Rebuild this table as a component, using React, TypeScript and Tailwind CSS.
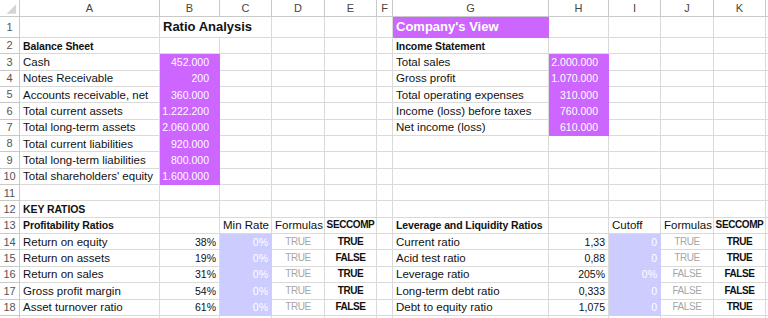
import React from "react";

type Kind =
  | "text"
  | "bold"
  | "num"
  | "purple"
  | "blue"
  | "muted"
  | "check"
  | "title"
  | "company";

type Cell = { t?: string; k?: Kind; span?: number };

const kindClass: Record<Kind, string> = {
  text: "justify-start pl-[3px] text-[11.5px] text-[#111] border-[#dadada]",
  bold: "justify-start pl-[3px] text-[10.5px] font-bold tracking-[-0.1px] text-[#111] border-[#dadada]",
  num: "justify-end pr-[3px] text-[10.5px] text-[#111] border-[#dadada]",
  purple: "justify-end pr-[10px] text-[10.5px] text-white bg-[#cc66ff] border-[#cc66ff]",
  blue: "justify-end pr-[3px] text-[10.5px] text-white bg-[#ccccff] border-[#ccccff]",
  muted: "justify-center text-[10px] tracking-[-0.4px] text-[#a6a6a6] border-[#dadada]",
  check: "justify-center text-[10px] font-bold tracking-[-0.4px] text-[#111] border-[#dadada]",
  title: "justify-start pl-[3px] text-[13px] font-bold text-[#111] border-[#dadada]",
  company: "justify-start pl-[3px] text-[13px] font-bold text-white bg-[#cc66ff] border-[#cc66ff]",
};

const letters = ["A", "B", "C", "D", "E", "F", "G", "H", "I", "J", "K"];

const E: Cell = {};

const balance: [string, string][] = [
  ["Cash", "452.000"],
  ["Notes Receivable", "200"],
  ["Accounts receivable, net", "360.000"],
  ["Total current assets", "1.222.200"],
  ["Total long-term assets", "2.060.000"],
  ["Total current liabilities", "920.000"],
  ["Total long-term liabilities", "800.000"],
  ["Total shareholders' equity", "1.600.000"],
];

const income: [string, string][] = [
  ["Total sales", "2.000.000"],
  ["Gross profit", "1.070.000"],
  ["Total operating expenses", "310.000"],
  ["Income (loss) before taxes", "760.000"],
  ["Net income (loss)", "610.000"],
];

const profit = [
  ["Return on equity", "38%", "TRUE"],
  ["Return on assets", "19%", "FALSE"],
  ["Return on sales", "31%", "TRUE"],
  ["Gross profit margin", "54%", "TRUE"],
  ["Asset turnover ratio", "61%", "FALSE"],
];

const leverage = [
  ["Current ratio", "1,33", "0", "TRUE", "TRUE"],
  ["Acid test ratio", "0,88", "0", "TRUE", "TRUE"],
  ["Leverage ratio", "205%", "0%", "FALSE", "FALSE"],
  ["Long-term debt ratio", "0,333", "0", "FALSE", "FALSE"],
  ["Debt to equity ratio", "1,075", "0", "FALSE", "TRUE"],
];

function buildRows(): Cell[][] {
  const rows: Cell[][] = [];
  rows.push([
    E,
    { t: "Ratio Analysis", k: "title", span: 2 },
    E,
    E,
    E,
    { t: "Company's View", k: "company" },
    E,
    E,
    E,
    E,
  ]);
  rows.push([{ t: "Balance Sheet", k: "bold" }, E, E, E, E, E, { t: "Income Statement", k: "bold" }, E, E, E, E]);
  balance.forEach(([label, val], i) => {
    const inc = income[i];
    rows.push([
      { t: label, k: "text" },
      { t: val, k: "purple" },
      E,
      E,
      E,
      E,
      inc ? { t: inc[0], k: "text" } : E,
      inc ? { t: inc[1], k: "purple" } : E,
      E,
      E,
      E,
    ]);
  });
  rows.push([E, E, E, E, E, E, E, E, E, E, E]);
  rows.push([{ t: "KEY RATIOS", k: "bold" }, E, E, E, E, E, E, E, E, E, E]);
  rows.push([
    { t: "Profitability Ratios", k: "bold" },
    E,
    { t: "Min Rate", k: "text" },
    { t: "Formulas", k: "text" },
    { t: "SECCOMP", k: "check" },
    E,
    { t: "Leverage and Liquidity Ratios", k: "bold" },
    E,
    { t: "Cutoff", k: "text" },
    { t: "Formulas", k: "text" },
    { t: "SECCOMP", k: "check" },
  ]);
  profit.forEach((p, i) => {
    const l = leverage[i];
    rows.push([
      { t: p[0], k: "text" },
      { t: p[1], k: "num" },
      { t: "0%", k: "blue" },
      { t: "TRUE", k: "muted" },
      { t: p[2], k: "check" },
      E,
      { t: l[0], k: "text" },
      { t: l[1], k: "num" },
      { t: l[2], k: "blue" },
      { t: l[3], k: "muted" },
      { t: l[4], k: "check" },
    ]);
  });
  return rows;
}

function SheetCell({ cell }: { cell: Cell }) {
  const kind = cell.k ?? "text";
  return (
    <div
      className={`flex items-center whitespace-nowrap border-r border-b leading-[16px] ${kindClass[kind]} ${
        cell.span === 2 ? "col-span-2" : ""
      }`}
    >
      {cell.t}
    </div>
  );
}

export default function App() {
  const rows = buildRows();

  return (
    <div className="h-[318px] w-[768px] overflow-hidden bg-white font-['Liberation_Sans',Arial,sans-serif]">
      <div className="grid h-full grid-cols-[20px_140px_60px_52px_53px_52px_16px_156px_60px_52px_53px_52px_1fr] grid-rows-[17px_21px_repeat(17,16.35px)_1fr]">
        {/* corner */}
        <div className="flex items-end justify-end border-r border-b border-[#c9c9c9] bg-white">
          <svg width="20" height="17" viewBox="0 0 20 17">
            <polygon points="17,5 17,15 7,15" fill="#d4d4d4" />
          </svg>
        </div>
        {/* column headers */}
        {letters.map((l) => (
          <div
            key={l}
            className="flex items-center justify-center border-r border-b border-[#c9c9c9] bg-white text-[11px] text-[#444]"
          >
            {l}
          </div>
        ))}
        <div className="border-b border-[#c9c9c9] bg-white" />

        {/* sheet rows */}
        {rows.map((row, ri) => (
          <React.Fragment key={ri}>
            <div className="flex items-center justify-center border-r border-b border-[#c9c9c9] bg-white text-[11px] text-[#555]">
              {ri + 1}
            </div>
            {row.map((cell, ci) => (
              <SheetCell key={ci} cell={cell} />
            ))}
            <div className="border-b border-[#dadada]" />
          </React.Fragment>
        ))}

        {/* partial row 19 */}
        <div className="border-r border-[#c9c9c9]" />
        {letters.map((l) => (
          <div key={l} className="border-r border-[#dadada]" />
        ))}
        <div />
      </div>
    </div>
  );
}
